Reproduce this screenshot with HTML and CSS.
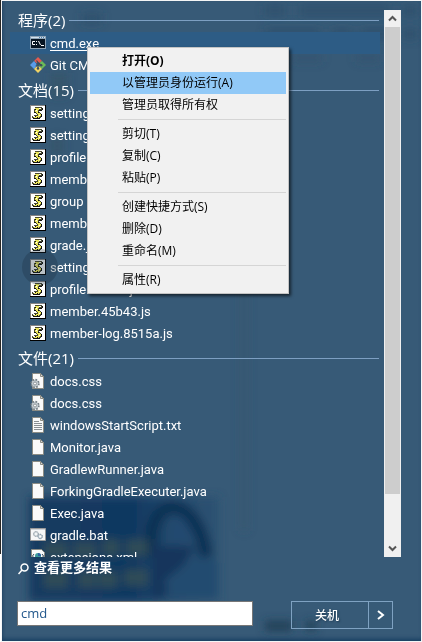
FILE: index.html
```html
<!DOCTYPE html>
<html lang="zh-CN">
<head>
<meta charset="utf-8">
<title>开始菜单搜索</title>
<link rel="stylesheet" href="styles.css">
</head>
<body>
<svg class="defs" width="0" height="0" aria-hidden="true">
  <defs>
    <symbol id="i-cmd" viewBox="0 0 16 16">
      <path fill="#8ea3b5" d="M0 1h16v13H0z"/><path fill="#d4e2ee" d="M1 2h14v1H1z"/><path fill="#4b7fae" d="M9 2h1v1H9zM11 2h1v1h-1zM13 2h1v1h-1z"/>
      <path fill="#071522" d="M1 4h14v9H1z"/>
      <path fill="none" stroke="#fff" stroke-width="1" d="M5 6.500H2.500v3H5M6.500 6v1M6.500 9v1M8.500 6l2 4M11 10.500h3"/>
    </symbol>
    <symbol id="i-git" viewBox="0 0 16 16">
      <path fill="#e25a50" d="M8 0l4 4-2.500 2L8 5 6.500 6 4 4z"/>
      <path fill="#5a9be8" d="M4 4l2.500 3-1 2 .5 1-2 2L0 8z"/>
      <path fill="#6cba58" d="M12 4l4 4-4 4-2.500-2.500L10 7.500 9.500 6z"/>
      <path fill="#f0d264" d="M6 10l2-1 2 1 2 2-4 4-4-4z"/>
      <path fill="none" stroke="#3c4c5a" stroke-width="1.200" d="M6.500 3.500L8 5.500V12M8.500 6l2.500 2"/>
      <circle cx="8" cy="11.500" r="1.200" fill="#3c4c5a"/><circle cx="11.200" cy="8.200" r="1.200" fill="#3c4c5a"/>
    </symbol>
    <symbol id="i-js" viewBox="0 0 16 16">
      <path fill="#000" d="M0 0h16v16H0z"/><path fill="#848484" d="M0 0h15v15H0z"/><path fill="#fff" d="M1 1h14v14H1z"/>
      <path fill="#4a4a30" d="M5 2h7v1h1v2h-1v1H9v1h1v1h1v1h1v3h-1v1h-1v1H3v-1H2v-2h2v-1h3V9H6V8H5V7H4V4h1z"/>
      <path fill="#ece65a" d="M5 3h6v1H5zM5 4h4v1H5zM5 5h3v1H5zM5 6h3v1H5zM6 7h3v1H6zM7 8h3v1H7zM8 9h3v1H8zM8 10h3v1H8zM6 11h4v1H6zM4 12h5v1H4z"/>
      <path fill="#fff" d="M9 3h2v1H9zM6 5h1v1H6zM3 11h2v1H3zM9 10h1v1H9z"/>
      <path fill="#111" d="M12 3h1v2h-1zM9 5h3v1H9zM11 9h1v3h-1zM3 13h7v1H3zM4 7h2v1H4zM5 4h1v1H5zM8 7h1v1H8zM5 11h1v1H5zM7 12h1v1H7z"/>
    </symbol>
    <symbol id="i-page" viewBox="0 0 16 16">
      <path fill="#fafafa" stroke="#8c8c84" d="M2.500.5h8l3 3v12h-11z"/><path fill="#d9d9d9" stroke="#8c8c84" d="M10.500.5v3h3z"/>
    </symbol>
    <symbol id="i-txt" viewBox="0 0 16 16">
      <use href="#i-page"/><path stroke="#8a8f93" d="M4 4.500h5M4 6.500h8M4 8.500h8M4 10.500h8M4 12.500h8"/>
    </symbol>
    <symbol id="i-css" viewBox="0 0 16 16">
      <use href="#i-page"/>
      <circle cx="5" cy="10.500" r="3.700" fill="#b9c2c8" stroke="#737d84" stroke-width="2" stroke-dasharray="1.600 1.300"/>
      <circle cx="5" cy="10.500" r="3" fill="#c4ccd1"/><circle cx="5" cy="10.500" r="1.500" fill="#f7f7f7" stroke="#7d868c" stroke-width=".8"/>
    </symbol>
    <symbol id="i-bat" viewBox="0 0 16 16">
      <path fill="#f7f7f7" stroke="#9a9a9a" d="M.5 1.500h15v12H.5z"/><path fill="#d2d6da" d="M1 2h14v1H1z"/>
      <g stroke="#8b979f" fill="#cfd6da"><circle cx="6" cy="7" r="2.500" stroke-dasharray="1.200 .8"/><circle cx="10.200" cy="9.500" r="2.200" stroke="#6d8699" stroke-dasharray="1.200 .6"/></g>
      <circle cx="6" cy="7" r="1" fill="#fff"/><circle cx="10.200" cy="9.500" r="1" fill="#fff"/>
    </symbol>
    <symbol id="i-xml" viewBox="0 0 16 16">
      <path fill="#fafafa" stroke="#8c8c84" d="M1.500.5h10l3 3v12h-13z"/>
      <circle cx="8" cy="7" r="3" fill="#3d9a9c"/><path fill="#2b5fa0" d="M8 4a3 3 0 0 1 3 3H8z"/>
      <path fill="none" stroke="#345" d="M4 5L2.500 7 4 9M12 5l1.500 2L12 9"/>
    </symbol>
  </defs>
</svg>
<main class="panel">
  <svg class="backdrop" viewBox="0 0 419 640" preserveAspectRatio="none" aria-hidden="true">
    <defs>
      <filter id="soft" x="-20%" y="-20%" width="140%" height="140%"><feGaussianBlur stdDeviation="4"/></filter>
      <linearGradient id="art"><stop offset="0" stop-color="#153b60"/><stop offset=".55" stop-color="#103861"/><stop offset=".75" stop-color="#234a6d"/><stop offset="1" stop-color="#2d5272"/></linearGradient>
    </defs>
    <g filter="url(#soft)">
      <path fill="#35566c" d="M238 110h8v420h-8z" opacity=".5"/>
      <path fill="url(#art)" d="M27 496h190v104H27z"/>
      <path fill="none" stroke="#0d3055" stroke-width="14" d="M150 556c-8-66 46-66 54 0"/>
      <path fill="#234a6f" d="M168 545c-4-36 16-40 22-8z"/>
      <path fill="#12365b" d="M150 545h44l-34 52h-10z"/>
      <path fill="#234b6f" d="M162 580l32-26 22 8v34h-46z"/>
      <g fill="#324f57" opacity=".9"><path d="M42 541h24v16H42zM72 541h22v16H72zM100 538h18v17h-18zM124 538h22v17h-22zM42 570h24v17H42zM76 570h18v17H76zM96 570h20v17H96zM122 568h24v17h-24z"/><path d="M48 72h18v24H48zM48 136h14v18H48z" opacity=".4"/></g>
      <path fill="#284c69" d="M262 5h22v9h-22zM297 5h92v9h-92zM263 28h56v10h-56zM329 28h22v10h-22zM358 28h32v10h-32zM400 5h16v10h-16zM400 28h16v10h-16zM80 12h20v11H80z" opacity=".65"/>
      <path fill="#2f506b" d="M290 53h30v8h-30zM354 53h24v8h-24z" opacity=".5"/>
      <path fill="#213f57" d="M263 620h27v10h-27zM304 620h10v10h-10z"/>
    </g>
  </svg>
  <section class="results">
    <div class="list">
      <h2>程序(2)</h2>
      <ul>
        <li class="active"><svg class="icon"><use href="#i-cmd"/></svg><a href="#">cmd.exe</a></li>
        <li><svg class="icon"><use href="#i-git"/></svg><a href="#">Git CMD</a></li>
      </ul>
      <h2>文档(15)</h2>
      <ul>
        <li><svg class="icon"><use href="#i-js"/></svg><a href="#">setting</a></li>
        <li><svg class="icon"><use href="#i-js"/></svg><a href="#">setting</a></li>
        <li><svg class="icon"><use href="#i-js"/></svg><a href="#">profile</a></li>
        <li><svg class="icon"><use href="#i-js"/></svg><a href="#">member</a></li>
        <li><svg class="icon"><use href="#i-js"/></svg><a href="#">group</a></li>
        <li><svg class="icon"><use href="#i-js"/></svg><a href="#">member</a></li>
        <li><svg class="icon"><use href="#i-js"/></svg><a href="#">grade.js</a></li>
        <li class="pressed"><svg class="icon"><use href="#i-js"/></svg><a href="#">setting</a></li>
        <li><svg class="icon"><use href="#i-js"/></svg><a href="#">profile.45b43.js</a></li>
        <li><svg class="icon"><use href="#i-js"/></svg><a href="#">member.45b43.js</a></li>
        <li><svg class="icon"><use href="#i-js"/></svg><a href="#">member-log.8515a.js</a></li>
      </ul>
      <h2>文件(21)</h2>
      <ul>
        <li><svg class="icon"><use href="#i-css"/></svg><a href="#">docs.css</a></li>
        <li><svg class="icon"><use href="#i-css"/></svg><a href="#">docs.css</a></li>
        <li><svg class="icon"><use href="#i-txt"/></svg><a href="#">windowsStartScript.txt</a></li>
        <li><svg class="icon"><use href="#i-page"/></svg><a href="#">Monitor.java</a></li>
        <li><svg class="icon"><use href="#i-page"/></svg><a href="#">GradlewRunner.java</a></li>
        <li><svg class="icon"><use href="#i-page"/></svg><a href="#">ForkingGradleExecuter.java</a></li>
        <li><svg class="icon"><use href="#i-page"/></svg><a href="#">Exec.java</a></li>
        <li><svg class="icon"><use href="#i-bat"/></svg><a href="#">gradle.bat</a></li>
        <li><svg class="icon"><use href="#i-xml"/></svg><a href="#">extensions.xml</a></li>
      </ul>
    </div>
    <div class="scrollbar">
      <button type="button" aria-label="向上滚动"><svg viewBox="0 0 17 17"><path d="M5 10.500l3.500-3.500 3.500 3.500"/></svg></button>
      <div class="track"><div class="thumb"></div></div>
      <button type="button" aria-label="向下滚动"><svg viewBox="0 0 17 17"><path d="M5 6.500l3.500 3.500 3.500-3.500"/></svg></button>
    </div>
  </section>
  <a class="more" href="#"><svg viewBox="0 0 12 12"><circle cx="6.500" cy="4.500" r="3.500"/><path d="M4 7L.5 11"/></svg><span>查看更多结果</span></a>
  <footer class="bar">
    <input class="search" type="text" value="cmd" aria-label="搜索程序和文件">
    <div class="power">
      <button class="shutdown" type="button">关机</button>
      <button class="options" type="button" aria-label="更多电源选项"><svg viewBox="0 0 8 10"><path d="M1 1l5 4-5 4"/></svg></button>
    </div>
  </footer>
</main>
<div class="menu" role="menu">
  <button type="button" role="menuitem" class="default">打开(O)</button>
  <button type="button" role="menuitem" class="hover">以管理员身份运行(A)</button>
  <button type="button" role="menuitem">管理员取得所有权</button>
  <hr>
  <button type="button" role="menuitem">剪切(T)</button>
  <button type="button" role="menuitem">复制(C)</button>
  <button type="button" role="menuitem">粘贴(P)</button>
  <hr>
  <button type="button" role="menuitem">创建快捷方式(S)</button>
  <button type="button" role="menuitem">删除(D)</button>
  <button type="button" role="menuitem">重命名(M)</button>
  <hr>
  <button type="button" role="menuitem">属性(R)</button>
</div>
</body>
</html>
```
FILE: styles.css
```css
* { box-sizing: border-box; }
body {
  margin: 0;
  height: 100vh;
  padding: 1px 1px 1px 2px;
  overflow: hidden;
  background: linear-gradient(#292725 0 554px, #fff 554px) 0 0 / 1px 100% no-repeat, #f4f5f6;
  font-family: "Open Sans", "Noto Sans CJK SC", sans-serif;
  font-size: 13px;
  color: #fff;
}
.defs { position: absolute; }
button { font: inherit; border: 0; padding: 0; margin: 0; background: none; color: inherit; }
.panel {
  position: relative;
  display: flex;
  flex-direction: column;
  height: 100%;
  padding-bottom: 12px;
  background: #375a77;
  box-shadow: inset 0 -4px 4px -2px #173e61, inset 3px 0 3px -2px #294a66;
}
.backdrop { position: absolute; inset: 0; width: 100%; height: 100%; }
.results, .more, .bar { position: relative; }
.results { flex: 1; min-height: 0; display: flex; padding: 5px 20px 0 8px; }
.list { flex: 1; min-width: 0; overflow: hidden; }
h2 {
  display: flex;
  align-items: center;
  gap: 4px;
  height: 26px;
  margin: 0;
  padding: 2px 1px 0 8px;
  font-size: 15px;
  font-weight: 400;
  line-height: 24px;
}
h2::after { content: ""; flex: 1; height: 1px; background: #7d9fc2; }
ul { margin: 0; padding: 0; list-style: none; }
li { display: flex; align-items: center; gap: 4px; height: 22px; padding-left: 20px; }
li a {
  padding-top: 2px;
  color: inherit;
  font-family: Roboto, "Noto Sans CJK SC", sans-serif;
  text-decoration: none;
  line-height: 20px;
  white-space: nowrap;
}
.icon { width: 16px; height: 16px; flex: none; }
.active { background: #2d5c85; }
.active a { text-decoration: underline; text-underline-offset: 2px; }
.pressed { position: relative; }
.pressed::after {
  content: "";
  position: absolute;
  left: 12px;
  top: -7px;
  width: 36px;
  height: 36px;
  border-radius: 50%;
  background: rgba(28, 48, 62, .3);
}
.scrollbar {
  display: flex;
  flex-direction: column;
  width: 17px;
  margin: 4px 0 0 4px;
  background: #f0f0f0;
}
.scrollbar button, .scrollbar svg { display: block; width: 17px; height: 17px; }
.scrollbar path { fill: none; stroke: #555; stroke-width: 2; }
.track { flex: 1; padding: 0 1px; }
.thumb { height: 91%; background: #cdcdcd; }
.more {
  display: flex;
  align-items: center;
  gap: 4px;
  height: 24px;
  margin-bottom: 20px;
  padding-left: 16px;
  color: inherit;
  font-weight: 700;
  text-decoration: none;
}
.more svg { width: 12px; height: 12px; }
.more span { line-height: 20px; padding-bottom: 4px; }
.more circle, .more path { fill: none; stroke: #fff; stroke-width: 1.5; }
.bar { display: flex; align-items: flex-start; gap: 38px; height: 28px; padding: 0 28px 0 15px; }
.search {
  flex: 1;
  min-width: 0;
  height: 25px;
  padding: 0 3px 2px;
  border: 1px solid #777;
  background: #fff;
  color: #23588c;
  font: inherit;
}
.power { display: flex; width: 102px; height: 28px; border: 1px solid #7fa2c2; }
.shutdown { flex: 1; padding-right: 6px; font-size: 12px; font-weight: 500; text-shadow: 1px 1px 2px #1d3a52; }
.options { width: 24px; border-left: 1px solid #7fa2c2; }
.options svg { width: 8px; height: 10px; }
.options path { fill: none; stroke: #fff; stroke-width: 2; }
.menu {
  position: absolute;
  left: 87px;
  top: 47px;
  width: 202px;
  padding: 2px;
  border: 1px solid #c4c4c4;
  background: #f1f1f1;
  box-shadow: 2px 2px 3px rgba(0, 0, 0, .6);
  color: #000;
  font-size: 12px;
}
.menu button { display: block; width: 100%; height: 22px; padding-left: 32px; text-align: left; line-height: 22px; }
.menu .default { font-weight: 700; }
.menu .hover { background: #91c9f7; }
.menu hr { height: 1px; margin: 3px 0 3px 28px; border: 0; background: #d5d5d5; }
```
